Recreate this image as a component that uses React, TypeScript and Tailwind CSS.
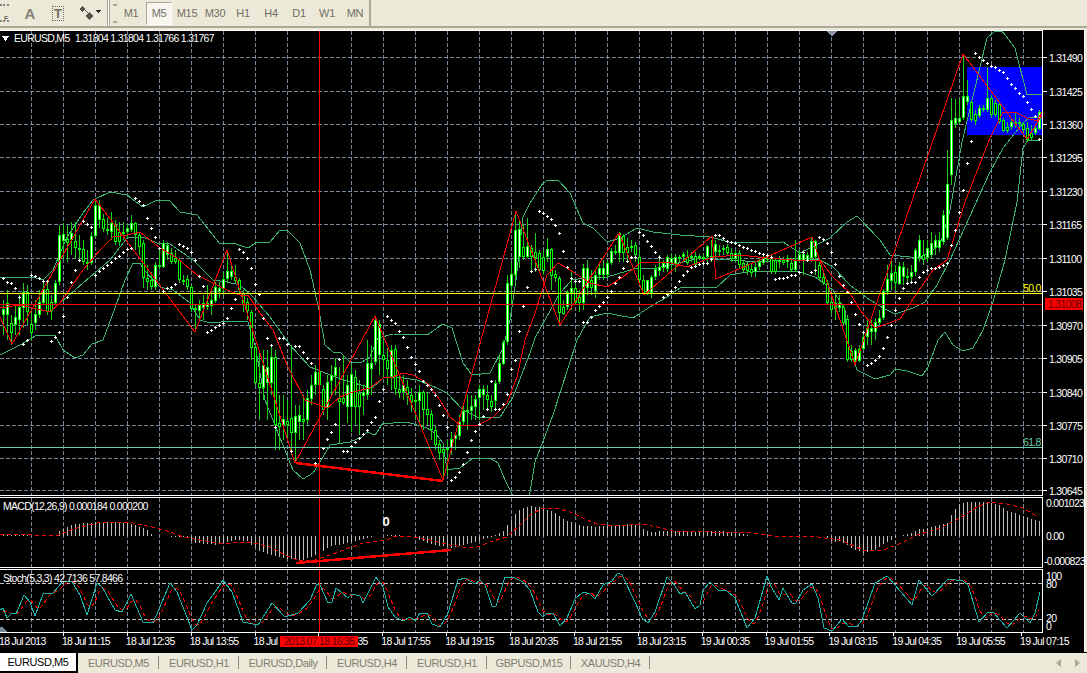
import React from 'react'

// top, bottom, high, low of every bar, oldest first. bar i sits at x = 3 + 4i
const bars: number[][] = [
  [309,315,300,335],[303,315,290,340],[323,333,315,345],[317,325,305,335],[307,320,295,335],[292,308,283,328],[292,312,285,325],[324,333,310,340],
  [314,323,300,330],[302,315,290,318],[289,303,280,305],[289,312,280,315],[302,311,295,320],[283,303,280,305],[235,282,225,285],[234,241,223,260],
  [239,243,225,262],[233,240,222,255],[241,248,222,258],[248,250,235,262],[249,262,240,265],[262,263,250,270],[236,263,232,265],[205,236,199,237],
  [205,220,200,228],[219,229,214,232],[229,231,218,235],[223,232,212,240],[225,242,220,245],[232,242,222,246],[232,233,222,240],[228,232,224,238],
  [223,230,215,232],[223,235,222,250],[235,247,232,255],[243,278,240,288],[278,282,265,290],[280,287,272,290],[265,287,262,290],[265,267,250,270],
  [243,267,240,268],[245,255,242,260],[253,262,248,264],[258,262,250,264],[260,280,258,283],[280,282,275,285],[279,287,275,290],[287,309,285,312],
  [308,310,305,332],[305,311,300,322],[303,308,295,320],[303,307,285,310],[300,306,290,315],[287,301,282,303],[288,292,282,298],[279,289,272,295],
  [271,279,250,282],[271,277,262,280],[277,281,265,283],[280,290,278,295],[293,305,290,312],[302,311,298,320],[312,348,310,360],[347,383,345,385],
  [383,388,350,420],[365,388,350,400],[367,383,350,420],[357,383,345,395],[357,425,350,450],[423,427,395,450],[419,425,395,440],[421,425,400,440],
  [418,433,345,455],[416,433,405,463],[415,422,405,440],[419,422,395,440],[398,420,390,425],[385,399,375,405],[372,385,365,395],[372,385,360,385],
  [389,410,385,415],[382,408,375,420],[375,381,365,395],[367,376,358,395],[398,402,367,443],[398,403,355,405],[385,407,375,423],[374,407,365,432],
  [377,407,370,425],[393,407,380,435],[392,396,385,415],[363,395,340,400],[363,369,345,395],[320,362,318,365],[324,355,320,375],[355,360,340,378],
  [360,369,348,385],[350,377,345,390],[349,389,345,395],[389,393,375,398],[385,392,375,400],[387,395,380,405],[395,402,388,412],[400,402,392,420],
  [392,401,385,425],[392,410,390,430],[409,415,392,425],[414,430,410,440],[430,445,425,450],[444,453,440,460],[449,453,445,478],[448,450,440,475],
  [439,448,432,455],[435,439,432,450],[422,436,415,440],[411,422,405,425],[410,412,395,430],[406,411,395,420],[399,407,395,420],[389,398,385,420],
  [389,395,385,410],[395,400,385,410],[401,407,395,412],[383,401,380,410],[363,382,355,384],[342,364,340,365],[283,342,275,345],[274,286,262,305],
  [230,275,212,280],[229,257,220,268],[247,257,225,260],[246,257,218,258],[248,257,245,270],[252,258,233,272],[253,270,250,272],[257,271,250,275],
  [249,257,238,262],[249,276,248,290],[274,278,270,282],[278,313,276,325],[307,314,300,315],[292,307,290,310],[288,293,270,310],[288,303,280,305],
  [297,303,290,312],[268,303,264,310],[268,288,260,295],[280,288,270,295],[275,291,270,298],[268,275,262,280],[268,275,260,280],[263,275,260,278],
  [251,263,248,265],[251,252,245,255],[233,253,232,262],[236,253,234,262],[247,253,238,262],[246,247,240,252],[245,255,242,262],[257,280,250,285],
  [280,293,275,295],[280,293,280,295],[277,293,275,298],[269,277,265,280],[267,271,255,276],[263,268,260,272],[257,269,255,272],[258,263,254,270],
  [257,264,254,272],[257,258,255,262],[254,257,252,262],[257,263,250,265],[256,257,252,262],[256,265,252,268],[256,257,254,260],[257,258,254,262],
  [246,257,245,262],[256,258,240,262],[244,252,240,258],[250,251,245,256],[248,250,245,255],[247,253,244,256],[253,259,248,262],[253,259,250,262],
  [253,265,250,268],[263,270,260,272],[264,271,262,275],[269,273,264,277],[267,272,262,277],[262,267,258,270],[258,263,255,265],[258,260,255,262],
  [258,272,255,274],[260,272,258,274],[260,262,256,268],[260,263,257,265],[258,262,255,268],[263,270,258,272],[261,270,240,272],[254,261,250,263],
  [254,261,250,275],[255,260,252,262],[241,258,238,262],[241,257,240,275],[265,278,262,280],[277,283,272,285],[283,303,280,305],[302,310,298,315],
  [303,309,295,320],[303,308,295,312],[307,323,305,325],[319,360,315,362],[351,360,345,362],[350,361,348,365],[349,361,345,362],[337,349,330,350],
  [328,337,318,345],[328,332,320,345],[322,332,318,340],[318,323,310,325],[291,318,289,320],[279,292,265,295],[273,281,260,290],[272,283,265,290],
  [266,284,262,285],[267,277,262,285],[276,278,268,285],[272,277,265,282],[250,272,248,276],[240,258,235,262],[255,260,240,265],[248,258,240,262],
  [243,255,232,258],[240,248,235,255],[240,248,232,252],[215,242,210,245],[184,238,150,240],[120,175,98,185],[118,124,99,128],[118,122,99,125],
  [96,118,55,120],[96,102,80,105],[102,120,100,122],[114,121,110,125],[108,116,105,118],[108,110,105,112],[98,110,67,112],[98,115,95,118],
  [103,115,100,117],[104,122,103,124],[120,131,118,132],[127,131,122,133],[122,127,118,130],[122,123,113,128],[122,124,118,128],[124,130,122,133],
  [128,140,122,142],[133,138,125,140],[128,133,124,135],[112,129,110,130],
]

// parabolic SAR, one y per bar
const sar = [
  278,282,283,288,297,344,340,275,276,278,281,281,341,337,332,316,297,282,270,260,221,224,227,275,271,268,265,262,258,256,
  252,249,248,198,201,205,218,228,237,248,291,288,287,284,244,246,248,252,260,276,286,332,330,327,325,323,318,308,299,249,
  252,258,268,284,294,318,338,345,427,338,338,344,451,346,346,352,358,363,463,458,448,439,432,424,359,451,451,446,442,438,
  434,430,422,417,401,389,316,320,323,331,337,347,357,364,371,381,385,389,395,405,415,427,480,477,472,464,452,440,431,424,
  416,409,381,409,409,404,394,369,360,331,306,287,271,269,211,213,216,219,225,233,251,267,278,281,281,322,322,317,310,306,
  302,297,291,283,277,268,261,257,257,232,235,241,246,252,257,297,294,291,287,281,275,271,267,266,264,263,263,259,235,235,
  238,241,242,243,245,247,248,250,251,253,254,255,257,279,278,278,277,275,275,272,252,260,272,270,237,239,243,252,264,276,
  285,292,302,314,324,332,365,363,360,356,348,337,325,310,298,288,283,282,282,277,272,270,268,268,267,265,263,245,230,212,
  190,163,141,53,57,60,63,66,67,70,72,78,84,88,93,96,102,109,116,139,
]

const upper = '0,277 20,278 33,277 43,280 53,270 67,237 83,213 93,200 110,192 127,195 143,207 157,200 170,201 180,212 197,215 220,244 233,243 248,248 257,242 270,242 280,230 287,230 300,243 310,270 319,310 325,345 333,352 340,352 350,362 362,362 370,357 378,338 393,334 427,335 443,324 452,328 463,363 472,375 490,373 503,348 510,320 516,280 523,217 530,203 543,183 548,180 558,180 570,193 583,223 593,228 607,242 620,238 637,228 653,232 680,235 710,237 733,243 783,242 800,253 830,238 847,222 857,216 880,240 890,255 920,258 940,245 950,210 962,142 987,38 995,31 1002,31 1015,48 1027,95 1042,94'
const middle = '60,303 83,283 110,260 127,238 143,237 157,243 170,244 193,260 213,280 227,282 240,285 253,297 270,317 290,345 310,367 343,380 372,388 383,378 397,377 417,380 437,388 447,393 463,410 477,417 500,417 513,397 530,353 535,338 560,293 572,280 590,277 607,277 637,268 657,268 700,258 760,262 800,258 820,260 833,267 850,285 867,298 883,308 895,314 913,308 925,302 937,285 950,260 975,205 990,172 1003,148 1023,123 1030,117 1042,117'
const lower = '0,355 20,345 37,335 55,335 63,350 75,358 83,355 92,344 103,340 115,308 125,280 133,263 140,263 143,269 160,287 173,290 190,303 200,320 210,323 233,321 248,322 255,345 265,400 278,433 293,470 303,479 313,473 323,457 330,445 350,442 362,437 367,432 375,435 383,423 393,423 407,422 427,428 437,435 443,443 447,470 460,468 472,459 490,458 498,463 505,480 512,494 520,510 527,510 535,462 553,415 577,340 590,317 607,313 617,315 633,318 653,305 667,297 680,288 700,287 717,287 730,275 747,272 773,271 800,272 815,277 833,290 845,310 847,340 857,370 875,379 890,375 895,369 907,371 922,376 928,367 938,340 945,332 953,345 963,351 973,348 983,330 993,302 1005,260 1017,202 1023,148 1028,140 1040,141'
const ma = '0,308 20,305 33,308 50,312 60,303 83,270 100,250 113,237 127,235 140,232 150,240 160,248 177,258 197,275 213,283 227,290 240,295 248,295 260,313 273,330 287,365 305,400 313,403 327,408 340,397 353,392 370,388 383,378 393,377 403,373 413,375 427,383 440,400 450,417 460,425 477,426 493,417 507,403 517,377 525,340 535,313 547,275 558,263 567,268 590,283 607,287 623,277 640,263 667,262 687,267 713,257 740,255 767,258 793,260 820,260 833,277 850,293 860,310 875,328 900,319 917,293 933,270 947,260 965,202 990,138 1003,112 1017,113 1027,118 1037,121 1042,112'
const zigzag = '0,317 12,344 95,199 195,332 227,250 295,463 375,316 443,480 516,211 560,325 619,233 644,295 712,236 716,279 812,237 855,365 963,54 1027,139 1042,115'

const macdHist = '0,1 55,0 60,6 67,9 73,12 87,13 100,14 113,14 127,13 137,10 147,6 153,0 185,-1 193,-7 207,-8 217,-9 233,-4 247,-5 257,-14 267,-18 283,-22 300,-25 320,-17 330,-10 340,-9 353,-5 377,0 390,1 410,0 430,-8 453,-12 473,-7 493,0 503,5 511,16 515,22 519,26 523,28 531,30 543,28 555,23 559,20 563,17 567,15 571,14 577,11 587,10 595,9 603,10 617,11 630,12 638,11 643,7 650,4 663,5 677,5 697,4 717,5 730,4 743,2 750,0 825,0 832,-6 840,-5 853,-13 863,-17 873,-15 883,-8 890,-5 900,0 910,3 920,7 933,9 947,13 953,25 960,33 967,34 987,34 997,32 1007,25 1023,20 1037,15'
const macdSignal = '0,534 13,534 33,535 57,536 63,533 77,528 97,523 117,522 133,523 147,526 157,528 173,533 183,537 200,540 217,543 233,543 250,542 270,547 287,556 300,561 315,560 330,555 363,543 387,540 393,537 407,536 430,540 450,545 463,547 477,547 493,541 507,537 520,525 530,515 543,508 557,508 573,513 587,520 597,524 617,526 643,524 657,527 673,531 710,532 743,532 773,536 810,536 840,540 863,550 883,550 897,545 917,535 940,528 960,518 977,507 990,502 1007,504 1023,508 1038,517'
const stoch = '0,610 3,608 7,618 12,613 16,614 24,595 30,602 35,616 43,594 53,593 63,581 72,582 80,595 87,615 97,583 102,587 115,610 122,612 131,594 143,622 153,623 162,602 170,583 177,592 192,630 197,625 207,603 213,595 223,580 232,592 243,622 258,625 272,603 285,617 298,613 310,600 317,584 320,585 328,603 332,602 336,588 348,598 352,594 360,596 363,603 376,577 383,587 388,607 395,617 403,621 410,617 415,621 420,613 427,613 432,624 440,627 448,613 458,580 465,578 475,584 480,580 485,585 492,606 496,606 505,577 513,577 523,582 530,590 538,612 543,617 547,613 553,613 560,626 567,618 575,599 583,592 590,594 595,599 603,585 612,581 618,573 622,575 635,602 642,618 648,623 655,612 667,577 673,583 680,594 685,592 695,609 700,605 703,590 710,582 718,590 727,591 735,598 747,628 755,618 767,576 772,588 779,600 783,588 792,603 796,603 803,590 812,584 818,598 824,628 832,631 842,619 848,626 857,627 862,620 875,583 887,576 895,585 912,605 919,580 932,596 948,579 963,581 968,585 979,622 988,612 993,612 1007,628 1020,613 1030,623 1035,613 1040,592'

const prices: [string, number][] = [
  ['1.31490', 57], ['1.31425', 91], ['1.31360', 124], ['1.31295', 157], ['1.31230', 191], ['1.31165', 224], ['1.31100', 258],
  ['1.31035', 291], ['1.30970', 325], ['1.30905', 358], ['1.30840', 392], ['1.30775', 425], ['1.30710', 458], ['1.30645', 490],
]
const dates = [
  '18 Jul 11:15', '18 Jul 12:35', '18 Jul 13:55', '18 Jul', '35', '18 Jul 17:55', '18 Jul 19:15', '18 Jul 20:35',
  '18 Jul 21:55', '18 Jul 23:15', '19 Jul 00:35', '19 Jul 01:55', '19 Jul 03:15', '19 Jul 04:35', '19 Jul 05:55', '19 Jul 07:15',
]
const periods = ['M1', 'M5', 'M15', 'M30', 'H1', 'H4', 'D1', 'W1', 'MN']
const tabs: [string, string][] = [
  ['EURUSD,M5', 'w-[81px]'], ['EURUSD,H1', 'w-[80px]'], ['EURUSD,Daily', 'w-[88px]'], ['EURUSD,H4', 'w-[80px]'],
  ['EURUSD,H1', 'w-[80px]'], ['GBPUSD,M15', 'w-[84px]'], ['XAUUSD,H4', 'w-[79px]'],
]
const gridX = Array.from({ length: 32 }, (_, i) => 31 + 32 * i)

const parse = (s: string) => s.split(' ').map((p) => p.split(',').map(Number))

function at(pts: number[][], x: number) {
  for (let i = 1; i < pts.length; i++) {
    if (x <= pts[i][0]) {
      const [x0, y0] = pts[i - 1]
      const [x1, y1] = pts[i]
      return y0 + ((y1 - y0) * (x - x0)) / (x1 - x0)
    }
  }
  return pts[pts.length - 1][1]
}

// the stochastic signal is just the main line averaged over the last bars
function signalLine() {
  const pts = parse(stoch)
  const out: string[] = []
  for (let x = 3; x <= 1040; x += 4) {
    const a = at(pts, x)
    const b = at(pts, x - 4)
    const c = at(pts, x - 8)
    out.push(`${x},${Math.round((a + b + c) / 3)}`)
  }
  return out.join(' ')
}

function Grid({ top, bottom }: { top: number; bottom: number }) {
  return (
    <g stroke="#778899" strokeDasharray="4 2">
      {gridX.map((x) => (
        <line key={x} x1={x + 0.5} x2={x + 0.5} y1={top} y2={bottom} />
      ))}
    </g>
  )
}

function Axis({ top, bottom }: { top: number; bottom: number }) {
  return <line x1={1042.5} x2={1042.5} y1={top} y2={bottom} stroke="#fff" />
}

function Crosshair({ top, bottom }: { top: number; bottom: number }) {
  return <line x1={319.5} x2={319.5} y1={top} y2={bottom} stroke="#ff0000" />
}

function Label({ x, y, children, className = 'fill-white' }: { x: number; y: number; children: React.ReactNode; className?: string }) {
  return (
    <text x={x} y={y} dominantBaseline="central" className={`text-[10.5px] tracking-[-0.7px] ${className}`}>
      {children}
    </text>
  )
}

function Candles() {
  return (
    <g>
      {bars.map(([t, b, h, l], i) => {
        const x = 3 + 4 * i
        const prev = bars[i - 1] ?? bars[0]
        const up = t + b <= prev[0] + prev[1]
        return (
          <g key={i}>
            <line x1={x + 0.5} x2={x + 0.5} y1={h} y2={l} stroke="#1fd01f" />
            <rect x={x - 1} y={t} width={3} height={Math.max(b - t, 2)} fill="#00ff00" />
            {b - t > 2 && <rect x={x} y={t + 1} width={1} height={b - t - 2} fill={up ? '#ffffff' : '#000000'} />}
          </g>
        )
      })}
    </g>
  )
}

function Sar() {
  const d = sar.map((y, i) => {
    const x = 3 + 4 * i
    return `M${x - 1} ${y + 0.5}h3M${x + 0.5} ${y - 1}v3`
  })
  return <path d={d.join('')} stroke="#fff" fill="none" />
}

function MainChart() {
  return (
    <svg width={1084} height={464} viewBox="0 31 1084 464" className="block" shapeRendering="crispEdges">
      <g stroke="#778899" strokeDasharray="4 2">
        {prices.map(([, y]) => (
          <line key={y} x1={0} x2={1042} y1={y + 0.5} y2={y + 0.5} />
        ))}
      </g>
      <Grid top={31} bottom={495} />
      <rect x={967} y={67} width={75} height={68} fill="#0000ff" />
      <polyline points={upper} fill="none" stroke="#3cb371" />
      <polyline points={middle} fill="none" stroke="#3cb371" />
      <polyline points={lower} fill="none" stroke="#3cb371" />
      <Candles />
      <polyline points={ma} fill="none" stroke="#ff0000" />
      <polyline points={zigzag} fill="none" stroke="#ff0000" />
      <line x1={296} y1={463} x2={443} y2={481} stroke="#ff0000" strokeWidth={2.5} />
      <Sar />
      <line x1={0} x2={1042} y1={293.5} y2={293.5} stroke="#ffff00" />
      <line x1={0} x2={1042} y1={304.5} y2={304.5} stroke="#ff0000" />
      <line x1={0} x2={1042} y1={447.5} y2={447.5} stroke="#66cdaa" />
      <Crosshair top={31} bottom={495} />
      <polygon points="827,31 837,31 832,37" fill="#8a96a3" />
      <polygon points="2,36 9,36 5.5,41" fill="#fff" />
      <Label x={14} y={38}>EURUSD,M5</Label>
      <Label x={75} y={38}>1.31804 1.31804 1.31766 1.31767</Label>
      <Label x={1023} y={288} className="fill-[#ffff00]">50.0</Label>
      <Label x={1023} y={442} className="fill-[#66cdaa]">61.8</Label>
      <Axis top={31} bottom={495} />
      {prices.map(([p, y]) => (
        <g key={p}>
          <line x1={1043} x2={1047} y1={y + 0.5} y2={y + 0.5} stroke="#fff" />
          <Label x={1049} y={y + 0.5}>{p}</Label>
        </g>
      ))}
      <rect x={1045} y={298} width={38} height={12} fill="#ff0000" />
      <Label x={1048} y={304} className="fill-[#600000]">1.31008</Label>
    </svg>
  )
}

function MacdChart() {
  const hist = parse(macdHist)
  return (
    <svg width={1084} height={69} viewBox="0 498 1084 69" className="block" shapeRendering="crispEdges">
      <Grid top={498} bottom={567} />
      <g stroke="#c0c0c0">
        {bars.map((_, i) => {
          const x = 3 + 4 * i
          return <line key={i} x1={x + 0.5} x2={x + 0.5} y1={536} y2={536 - Math.round(at(hist, x))} />
        })}
      </g>
      <polyline points={macdSignal} fill="none" stroke="#ff0000" strokeDasharray="4 3" />
      <line x1={296} y1={563} x2={451} y2={550} stroke="#ff0000" strokeWidth={2.5} />
      <Crosshair top={498} bottom={567} />
      <Label x={3} y={506}>MACD(12,26,9) 0.000184 0.000200</Label>
      <text x={386} y={521} textAnchor="middle" dominantBaseline="central" className="fill-white text-[13px] font-bold">0</text>
      <Axis top={498} bottom={567} />
      <Label x={1046} y={503}>0.001023</Label>
      <Label x={1046} y={536}>0.00</Label>
      <Label x={1044} y={561}>-0.000823</Label>
    </svg>
  )
}

function StochChart() {
  return (
    <svg width={1084} height={62} viewBox="0 570 1084 62" className="block" shapeRendering="crispEdges">
      <Grid top={570} bottom={632} />
      <g stroke="#c0c0c0" strokeDasharray="4 2">
        <line x1={0} x2={1042} y1={583.5} y2={583.5} />
        <line x1={0} x2={1042} y1={619.5} y2={619.5} />
      </g>
      <polygon points="0,627 2,627 7,632 0,632" fill="#778899" />
      <polyline points={signalLine()} fill="none" stroke="#ff0000" strokeDasharray="4 3" />
      <polyline points={stoch} fill="none" stroke="#20b2aa" />
      <Crosshair top={570} bottom={632} />
      <Label x={3} y={578}>Stoch(5,3,3) 42.7136 57.8466</Label>
      <Axis top={570} bottom={632} />
      <Label x={1046} y={576}>100</Label>
      <Label x={1046} y={584}>80</Label>
      <Label x={1046} y={618}>20</Label>
      <Label x={1046} y={626}>0</Label>
    </svg>
  )
}

function Toolbar() {
  return (
    <div className="flex h-[28px] items-center border-b-2 border-[#aca899] bg-[#ece9d8] text-[#716f64]">
      <div className="relative h-[18px] w-[9px] border-t-2 border-b-2 border-dotted border-[#8a887c]">
        <span className="absolute top-[9px] left-[4px] text-[7px] leading-none font-bold">F</span>
      </div>
      <span className="ml-[15px] w-[12px] text-center text-[15px] leading-none font-bold text-[#85837a]">A</span>
      <div className="ml-[16px] flex h-[15px] w-[12px] items-center justify-center border border-dotted border-[#716f64] text-[13px] leading-none font-bold">T</div>
      <svg width={23} height={14} viewBox="0 0 23 14" className="ml-[15px]" shapeRendering="crispEdges">
        <path d="M3 0l3 3-3 3-3-3zM10 6l4 4-4 4-4-4z" fill="#555549" />
        <path d="M5 3l6 6" stroke="#555549" />
        <path d="M16 4h6l-3 3z" fill="#222" />
      </svg>
      <div className="ml-[5px] h-[26px] w-[3px] border-x border-x-[#aca899] bg-white" />
      <div className="ml-[3px] h-[19px] w-[4px] border-y-2 border-dotted border-[#aca899]" />
      <div className="flex">
        {periods.map((p) => (
          <div key={p} className="flex h-[26px] w-[28px] items-center justify-center text-[11px] tracking-[-0.3px] first:ml-0">
            {p === 'M5' ? (
              <span className="flex h-[23px] w-[26px] items-center justify-center border border-t-[#aca899] border-r-white border-b-white border-l-[#aca899] bg-[#f6f5ee]">{p}</span>
            ) : (
              p
            )}
          </div>
        ))}
      </div>
      <div className="h-[26px] w-[2px] bg-[#aca899]" />
    </div>
  )
}

function DateAxis() {
  return (
    <div className="relative flex h-[19px] text-[10.5px] leading-[11px] tracking-[-0.7px] text-white">
      <div className="ml-[-1px] w-[63px] pt-[3px] whitespace-nowrap">18 Jul 2013</div>
      {dates.map((d) => (
        <div key={d} className="w-[64px] whitespace-nowrap">
          <div className="ml-px h-[3px] w-px bg-white" />
          {/* the crosshair label hides most of this date, only its end shows */}
          {d === '35' ? <span className="ml-[40px]">{d}</span> : d}
        </div>
      ))}
      <div className="absolute top-[3px] left-[280px] flex h-[11px] w-[78px] items-center justify-center bg-[#ff0000] text-[#600000]">2013.07.18 16:35</div>
    </div>
  )
}

function TabBar() {
  return (
    <div className="flex h-[21px] items-center border-t border-black bg-[#ece9d8] text-[11px] tracking-[-0.4px] text-[#7f7d73]">
      <div className="flex h-full w-[78px] items-center justify-center border-r-2 border-b-2 border-black bg-white text-black">EURUSD,M5</div>
      {tabs.map(([name, width], i) => (
        <div key={i} className={`relative flex h-full items-center justify-center ${width}`}>
          {name}
          <div className="absolute top-[3px] right-0 h-[13px] w-px bg-[#8a887c]" />
        </div>
      ))}
      <svg width={24} height={9} viewBox="0 0 24 9" className="ml-auto mr-[7px]">
        <polygon points="5,0 5,8 0,4" fill="#aca899" />
        <polygon points="19,0 19,8 24,4" fill="#aca899" />
      </svg>
    </div>
  )
}

export default function App() {
  return (
    <div className="flex h-[673px] w-[1087px] flex-col overflow-hidden bg-[#ece9d8] font-['Liberation_Sans',sans-serif]">
      <Toolbar />
      <div className="h-[2px] bg-[#ece9d8]" />
      <div className="flex flex-1">
        <div className="w-[1084px] bg-black">
          <div className="h-px w-[1043px] bg-white" />
          <MainChart />
          <div className="h-px w-[1043px] bg-white" />
          <div className="h-px" />
          <div className="h-px w-[1043px] bg-white" />
          <MacdChart />
          <div className="h-px w-[1043px] bg-white" />
          <div className="h-px" />
          <div className="h-px w-[1043px] bg-white" />
          <StochChart />
          <div className="h-px w-[1043px] bg-white" />
          <DateAxis />
        </div>
        <div className="w-px bg-white" />
      </div>
      <TabBar />
    </div>
  )
}
